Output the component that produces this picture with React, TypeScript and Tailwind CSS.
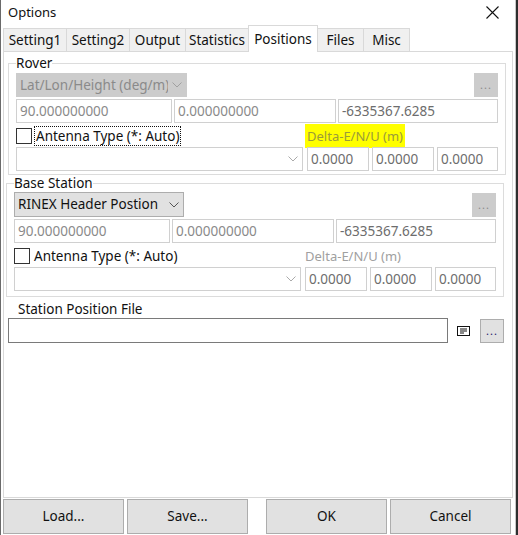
import React from "react";

const font = { fontFamily: '"Noto Sans", "Open Sans", sans-serif' };

function Chevron({ color = "#888" }: { color?: string }) {
  return (
    <svg width="10" height="6" viewBox="0 0 10 6" className="shrink-0">
      <path d="M0.5 0.5 L5 5 L9.5 0.5" fill="none" stroke={color} strokeWidth="1" />
    </svg>
  );
}

function Box({ w, text, color = "#7a7a7a" }: { w: string; text?: string; color?: string }) {
  return (
    <div className={`${w} h-[24px] border border-[#d0d0d0] bg-white flex items-center px-[3px] text-[13.5px] shrink-0`} style={{ color }}>
      {text}
    </div>
  );
}

function Dots({ disabled }: { disabled?: boolean }) {
  return (
    <div
      className={`w-[24px] h-[24px] flex items-end justify-center pb-[6px] border shrink-0 ${
        disabled ? "bg-[#cccccc] border-[#cccccc] text-[#8a8a8a]" : "bg-[#e1e1e1] border-[#adadad] text-[#1a1a6a]"
      }`}
    >
      <span className="text-[11px] leading-none tracking-[1px]">...</span>
    </div>
  );
}

function GroupBody({ rover }: { rover: boolean }) {
  return (
    <div className="flex flex-col">
      <div className={`flex items-center justify-between ${rover ? "h-[24px]" : "h-[25px]"}`}>
        {rover ? (
          <div className="w-[171px] h-[24px] bg-[#cccccc] border border-[#cccccc] flex items-center pl-[3px] pr-[4px] text-[13.5px] text-[#8a8a8a]">
            <span className="flex-1 overflow-hidden whitespace-nowrap">Lat/Lon/Height (deg/m)</span>
            <span className="ml-[4px]">
              <Chevron color="#a0a0a0" />
            </span>
          </div>
        ) : (
          <div className="w-[170px] h-[25px] bg-[#e1e1e1] border border-[#adadad] flex items-center justify-between pl-[3px] pr-[4px] text-[13.5px] text-[#111]">
            <span>RINEX Header Postion</span>
            <Chevron color="#555" />
          </div>
        )}
        <Dots disabled />
      </div>
      <div className="flex gap-[2px] mt-[2px]">
        <Box w="w-[156px]" text="90.000000000" color="#8a8a8a" />
        <Box w="w-[162px]" text="0.000000000" color="#8a8a8a" />
        <Box w="flex-1" text="-6335367.6285" color="#6d6d6d" />
      </div>
      <div className="flex items-center h-[22px] mt-[2px]">
        <div className="w-[16px] h-[16px] border border-[#333] bg-white shrink-0" />
        <span
          className={`ml-[3px] text-[13.5px] text-[#111] leading-[18px] px-[1px] ${
            rover ? "outline outline-1 outline-dotted outline-[#111]" : ""
          }`}
        >
          Antenna Type (*: Auto)
        </span>
        <span
          className={`ml-auto mr-[93px] text-[13px] leading-[24px] pl-[2px] pr-[2px] ${
            rover ? "bg-[#ffff00] text-[#9b9b3a]" : "text-[#a0a0a0]"
          }`}
        >
          Delta-E/N/U (m)
        </span>
      </div>
      <div className="flex gap-[3px]">
        <div className="w-[287px] h-[24px] border border-[#d0d0d0] bg-white flex items-center justify-end pr-[4px] mr-[1px] shrink-0">
          <Chevron color="#aaa" />
        </div>
        <Box w="w-[62px]" text="0.0000" color="#6d6d6d" />
        <Box w="w-[62px]" text="0.0000" color="#6d6d6d" />
        <Box w="flex-1" text="0.0000" color="#6d6d6d" />
      </div>
    </div>
  );
}

function DocIcon() {
  return (
    <svg width="13" height="10" viewBox="0 0 13 10" className="shrink-0">
      <rect x="0.5" y="0.5" width="12" height="9" fill="white" stroke="#111" />
      <line x1="3" y1="3" x2="10" y2="3" stroke="#111" />
      <line x1="3" y1="5" x2="10" y2="5" stroke="#111" />
      <line x1="3" y1="7" x2="7" y2="7" stroke="#111" />
    </svg>
  );
}

export default function App() {
  const tabs = [
    { label: "Setting1", w: "w-[64px]" },
    { label: "Setting2", w: "w-[64px]" },
    { label: "Output", w: "w-[57px]" },
    { label: "Statistics", w: "w-[64px]" },
    { label: "Positions", w: "w-[70px]", active: true },
    { label: "Files", w: "w-[47px]" },
    { label: "Misc", w: "w-[47px]" },
  ];
  return (
    <div className="w-[518px] h-[535px] bg-[#2e2e2e] flex" style={font}>
      <div className="w-[516px] h-full bg-white border-l border-[#6a6a6a] border-r border-r-[#c8c8c8] flex flex-col">
        <div className="h-[25px] flex items-center justify-between pl-[7px] pr-[16px] shrink-0">
          <span className="text-[13px] text-[#111]">Options</span>
          <svg width="13" height="13" viewBox="0 0 13 13">
            <path d="M0.5 0.5 L12.5 12.5 M12.5 0.5 L0.5 12.5" stroke="#111" strokeWidth="1.1" />
          </svg>
        </div>
        <div className="flex items-end h-[26px] pl-[2px] shrink-0">
          {tabs.map((t, i) =>
            t.active ? (
              <div
                key={t.label}
                className={`${t.w} h-[27px] bg-white border border-[#d9d9d9] border-b-0 -mb-px -ml-px relative z-10 flex items-start justify-center pt-[3px] text-[13.5px] text-[#111]`}
              >
                {t.label}
              </div>
            ) : (
              <div
                key={t.label}
                className={`${t.w} h-[23px] bg-[#f0f0f0] border border-[#d9d9d9] border-b-0 ${
                  i === 0 ? "" : "-ml-px"
                } flex items-center justify-center text-[13.5px] text-[#111]`}
              >
                {t.label}
              </div>
            )
          )}
        </div>
        <div className="ml-[2px] w-[510px] h-[447px] border border-[#d9d9d9] flex flex-col shrink-0">
          <fieldset className="ml-[4px] mt-[3px] w-[498px] border border-[#dcdcdc] px-[7px] pb-[3px] pt-[2px]">
            <legend className="text-[13.5px] text-[#111] leading-[16px]">Rover</legend>
            <GroupBody rover />
          </fieldset>
          <fieldset className="ml-[2px] mt-[0px] w-[498px] border border-[#dcdcdc] px-[7px] pb-[5px] pt-[1px]">
            <legend className="text-[13.5px] text-[#111] leading-[16px]">Base Station</legend>
            <GroupBody rover={false} />
          </fieldset>
          <div className="ml-[14px] mt-[4px] text-[13.5px] text-[#111] leading-[16px]">Station Position File</div>
          <div className="flex items-center ml-[4px] mt-[1px]">
            <div className="w-[440px] h-[25px] border border-[#7a7a7a] bg-white" />
            <div className="ml-[9px]">
              <DocIcon />
            </div>
            <div className="ml-[10px]">
              <Dots />
            </div>
          </div>
        </div>
        <div className="flex mt-[1px] pl-[2px]">
          {["Load...", "Save...", "", "OK", "Cancel"].map((b, i) =>
            b === "" ? (
              <div key={i} className="w-[15px]" />
            ) : (
              <div
                key={b}
                className="w-[121px] h-[35px] mr-[3px] bg-[#e1e1e1] border border-[#adadad] flex items-center justify-center text-[13.5px] text-[#111]"
              >
                {b}
              </div>
            )
          )}
        </div>
      </div>
    </div>
  );
}
